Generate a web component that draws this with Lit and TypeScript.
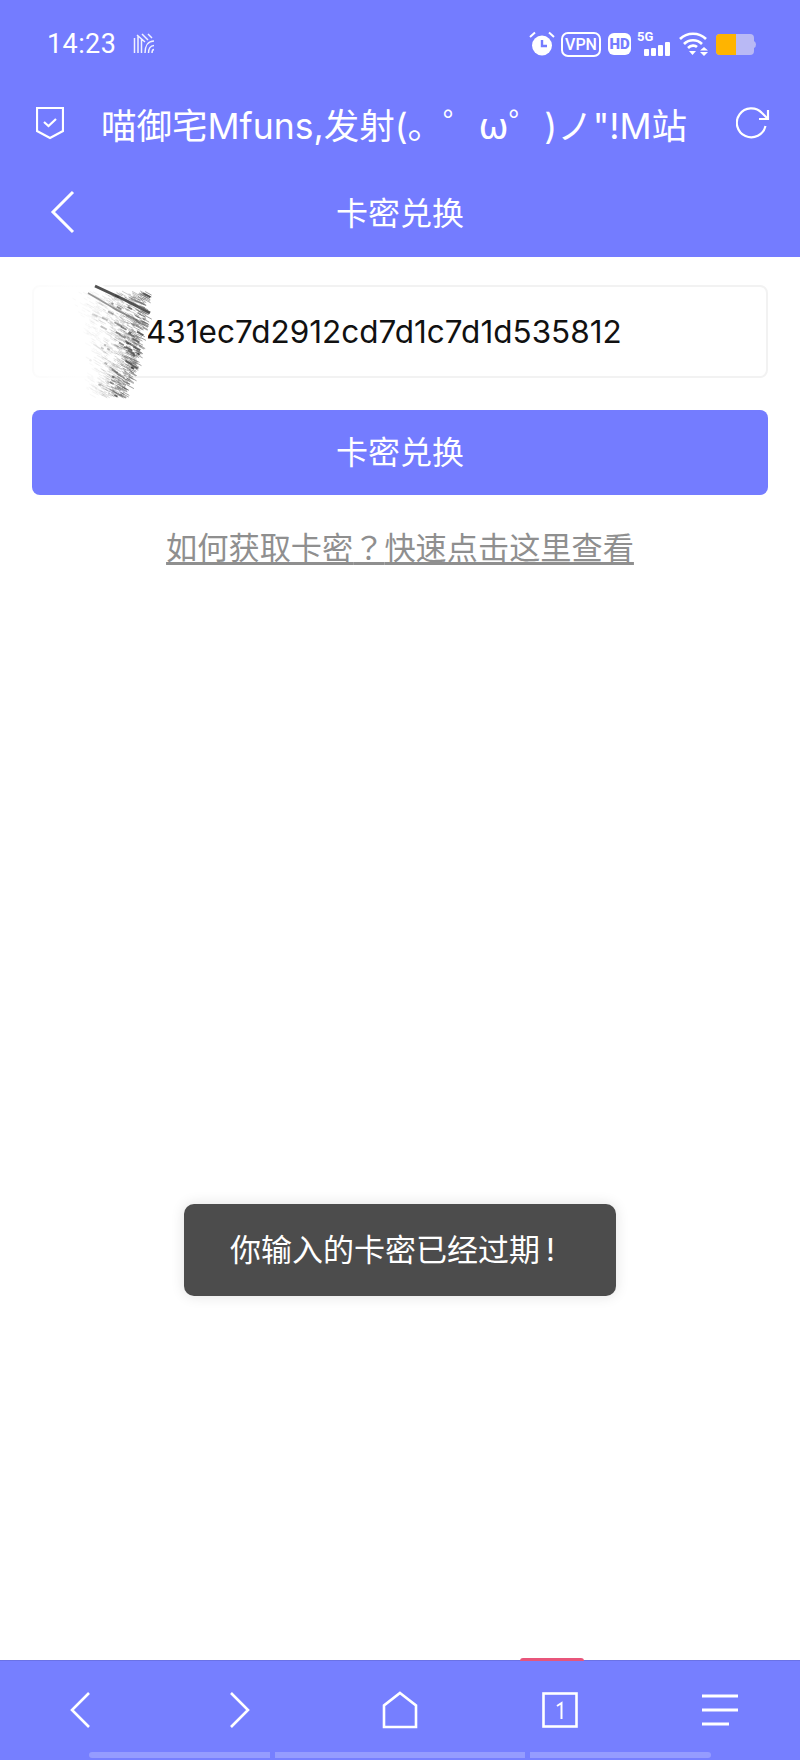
import { LitElement, html, css, svg } from "lit";
import { customElement } from "lit/decorators.js";

function scribble() {
  let seed = 12345;
  const r = () => ((seed = (seed * 16807) % 2147483647) / 2147483647);
  const out: any[] = [];
  out.push(svg`<path d="M95 29 L125 43 L150 56" stroke="#333" stroke-width="3" fill="none" opacity=".85"/>`);
  out.push(svg`<path d="M88 36 L112 50 L148 70" stroke="#555" stroke-width="1.500" fill="none" opacity=".6"/>`);
  for (let i = 0; i < 1000; i++) {
    const y0 = 34 + r() * 104;
    const t = (y0 - 34) / 104;
    const right = 146 - t * t * 24;
    const left = t < 0.5 ? 70 + t * 30 : 85 - (t - 0.5) * 4;
    const x = left + Math.pow(r(), 0.6) * (right - left);
    const len = 1.5 + r() * 6;
    const strength = (x - left) / (right - left);
    const dark = r() > 0.965;
    out.push(
      svg`<line x1=${x} y1=${y0} x2=${x + len} y2=${y0 + len * 0.55} stroke=${dark ? "#222" : "#666"} stroke-width=${dark ? 1.8 : 0.9} opacity=${dark ? 0.8 * strength : 0.03 + strength * strength * 0.65}/>`
    );
  }
  return out;
}

@customElement("app-root")
export class AppRoot extends LitElement {
  static styles = css`
    :host {
      display: block;
      width: 800px;
      height: 1760px;
      font-family: Inter, "Noto Sans CJK SC", sans-serif;
      background: #fff;
    }
    .page {
      position: relative;
      height: 1760px;
      display: flex;
      flex-direction: column;
      overflow: hidden;
    }
    svg { display: block; flex: none; }
    header { background: #747cff; color: #fff; height: 257px; flex: none; }
    .status {
      height: 88px;
      display: flex;
      align-items: center;
      padding: 0 44px 0 47px;
      box-sizing: border-box;
    }
    .time { font-size: 27px; font-family: Roboto, sans-serif; letter-spacing: .4px; margin-right: 17px; }
    .spacer { flex: 1; }
    .vpn {
      margin: 0 7px 0 6px;
      box-sizing: border-box;
      width: 40px; height: 25px;
      border: 2px solid #fff;
      border-radius: 7px;
      font: 500 16px/21px Roboto, sans-serif;
      text-align: center;
    }
    .hd {
      width: 23px; height: 22px;
      border-radius: 6px;
      background: #fff;
      color: #747cff;
      font: 900 15px/22px Roboto, sans-serif;
      text-align: center;
      margin-right: 6px;
    }
    .sig { position: relative; width: 34px; height: 24px; margin-right: 8px; }
    .fiveg { position: absolute; left: 0; top: -2px; font: 700 13px/14px Roboto, sans-serif; }
    .batt { margin-left: 8px; }
    .title {
      height: 72px;
      display: flex;
      align-items: center;
      padding: 0 30px 2px 36px;
      box-sizing: border-box;
    }
    .title-text {
      font-size: 35.500px;
      margin-left: 37px;
      white-space: nowrap;
      flex: 1;
    }
    .om { font-family: "DejaVu Sans", sans-serif; font-size: 36px; }
    .nav {
      height: 97px;
      position: relative;
      display: flex;
      align-items: center;
      justify-content: center;
      font-size: 32px;
      padding-top: 4px;
      box-sizing: border-box;
    }
    .nav svg { position: absolute; left: 50px; top: 30px; }
    main {
      flex: 1;
      padding: 28px 32px 0;
      display: flex;
      flex-direction: column;
    }
    .input-wrap { position: relative; }
    .input {
      box-sizing: border-box;
      height: 93px;
      border: 2px solid #f2f2f2;
      border-radius: 8px;
      background: #fff;
      display: flex;
      align-items: center;
      padding-left: 112px;
      font-size: 31.500px;
      color: #111;
    }
    .scribble { position: absolute; left: -32px; top: -28px; }
    .btn {
      margin-top: 32px;
      height: 85px;
      border-radius: 8px;
      background: #747cff;
      color: #fff;
      font-size: 32px;
      display: flex;
      align-items: center;
      justify-content: center;
      padding-bottom: 5px;
      box-sizing: border-box;
    }
    .link {
      margin-top: 28px;
      text-align: center;
      font-size: 31.200px;
      color: #8f8f8f;
      text-decoration: underline;
      text-decoration-thickness: 2.500px;
      text-underline-offset: 3px;
    }
    .tc { font-family: "Noto Sans CJK TC", sans-serif; }
    .bang { margin-left: 6px; }
    .toast {
      position: absolute;
      left: 184px;
      top: 1204px;
      width: 432px;
      height: 92px;
      box-sizing: border-box;
      padding: 0 0 6px 46px;
      border-radius: 10px;
      background: #4c4c4c;
      color: #fff;
      font-size: 31px;
      display: flex;
      align-items: center;
      box-shadow: 0 0 14px rgba(0,0,0,.12);
    }
    footer {
      position: relative;
      flex: none;
      height: 100px;
      background: #767fff;
      display: grid;
      grid-template-columns: repeat(5, 1fr);
      justify-items: center;
      border-top: 1px solid #6a72e6;
      box-sizing: border-box;
    }
    footer > svg { margin-top: 30px; }
    .bump {
      position: absolute;
      left: 520px; top: -3px;
      width: 64px; height: 3px;
      background: #e8557a;
      border-radius: 6px 6px 0 0;
    }
    .pill-row {
      position: absolute;
      left: 89px; top: 91px;
      display: flex;
      gap: 5px;
    }
    .pill { height: 6px; background: #959cff; }
    .pill.a { width: 181px; border-radius: 3px 0 0 3px; }
    .pill.b { width: 250px; }
    .pill.c { width: 181px; border-radius: 0 3px 3px 0; }
  `;

  render() {
    return html`
      <div class="page">
        <header>
          <div class="status">
            <span class="time">14:23</span>
            <svg width="22" height="22" viewBox="0 0 22 22" fill="none" stroke="#fff" stroke-width="1.500" opacity=".9">
              <path d="M1.500 5V20M5 3V20M8.500 6V20M4 2L12 9M9 1L15 7M15 1L19 5M21 8C15 8 12 13 12 20M21 12.500C17.500 12.500 15.500 16 15.500 20M21 16.500C19.500 16.500 19 18 19 20"/>
            </svg>
            <span class="spacer"></span>
            <svg width="26" height="26" viewBox="0 0 26 26" fill="#fff">
              <circle cx="13" cy="14.500" r="10"/>
              <path d="M1 6L6 1.500M25 6L20 1.500" stroke="#fff" stroke-width="2" fill="none"/>
              <path d="M13 9V15H18" stroke="#747cff" stroke-width="2.400" fill="none"/>
            </svg>
            <span class="vpn">VPN</span>
            <span class="hd">HD</span>
            <span class="sig">
              <span class="fiveg">5G</span>
              <svg width="34" height="24" viewBox="0 0 34 24" fill="#fff">
                <rect x="7" y="17" width="5" height="7" rx="1"/>
                <rect x="14" y="16" width="5" height="8" rx="1"/>
                <rect x="21" y="13" width="5" height="11" rx="1"/>
                <rect x="28" y="10" width="5" height="14" rx="1"/>
              </svg>
            </span>
            <svg width="29" height="24" viewBox="0 0 29 24" fill="none" stroke="#fff" stroke-width="2.600">
              <path d="M1 7C8 0 20 0 27 7M5 12C10 7 18 7 23 12M9 16C12 13 16 13 18 15"/>
              <path d="M10 19H17L13.500 23Z" fill="#fff" stroke="none"/>
              <path d="M21 18.500H29L25 15ZM21 20H29L25 24Z" fill="#fff" stroke="none"/>
            </svg>
            <svg class="batt" width="40" height="21" viewBox="0 0 40 21">
              <path d="M4 0H34Q38 0 38 4V17Q38 21 34 21H4Q0 21 0 17V4Q0 0 4 0Z" fill="#b9b9f5"/>
              <path d="M38 7Q40 8 40 10.500Q40 13 38 14Z" fill="#b9b9f5"/>
              <path d="M4 0H20V21H4Q0 21 0 17V4Q0 0 4 0Z" fill="#ffb400"/>
            </svg>
          </div>
          <div class="title">
            <svg width="28" height="33" viewBox="0 0 28 33" fill="none" stroke="#fff" stroke-width="2.200">
              <path d="M1 1H27V24L14 31L1 24Z"/>
              <path d="M8 15L12.500 19L20 12"/>
            </svg>
            <span class="title-text">喵御宅Mfuns,发射(。゜<span class="om">ω</span>゜)ノ"!M站</span>
            <svg width="34" height="33" viewBox="0 0 34 33" fill="none" stroke="#fff" stroke-width="2.200">
              <path d="M29.500 19A14.500 14.500 0 1 1 26 6L31 11"/>
              <path d="M32 3V12H23"/>
            </svg>
          </div>
          <div class="nav">
            <svg width="26" height="44" viewBox="0 0 26 44" fill="none" stroke="#fff" stroke-width="3">
              <path d="M23 2L3 22L23 42"/>
            </svg>
            <span>卡密兑换</span>
          </div>
        </header>
        <main>
          <div class="input-wrap">
            <div class="input">431ec7d2912cd7d1c7d1d535812</div>
            <svg class="scribble" width="180" height="145" viewBox="0 0 180 145">
              <defs>
                <linearGradient id="fade" x1="0" x2="1" y1="0" y2="0">
                  <stop offset="0" stop-color="#fff" stop-opacity=".7"/>
                  <stop offset=".3" stop-color="#fff" stop-opacity=".9"/>
                  <stop offset="1" stop-color="#fff"/>
                </linearGradient>
              </defs>
              <path d="M28 24H95L148 54V80L128 130L110 138L40 124H28Z" fill="url(#fade)"/>
              ${scribble()}
            </svg>
          </div>
          <div class="btn">卡密兑换</div>
          <div class="link">如何获取卡密<span class="tc">？</span>快速点击这里查看</div>
        </main>
        <div class="toast"><span>你输入的卡密已经过期<span class="bang">!</span></span></div>
        <footer>
          <span class="bump"></span>
          <svg width="20" height="38" viewBox="0 0 20 38" fill="none" stroke="#fff" stroke-width="2.600">
            <path d="M19 2L2 19L19 36"/>
          </svg>
          <svg width="20" height="38" viewBox="0 0 20 38" fill="none" stroke="#fff" stroke-width="2.600">
            <path d="M1 2L18 19L1 36"/>
          </svg>
          <svg width="36" height="38" viewBox="0 0 36 38" fill="none" stroke="#fff" stroke-width="2.600">
            <path d="M18 2L34 14.500V36H2V14.500Z"/>
          </svg>
          <svg width="36" height="38" viewBox="0 0 36 38" fill="none">
            <rect x="1.500" y="2.500" width="33" height="33" stroke="#fff" stroke-width="2.600"/>
            <path d="M15 15L19.500 12V28" stroke="#fff" stroke-width="2"/>
          </svg>
          <svg width="36" height="38" viewBox="0 0 36 38" fill="none" stroke="#fff" stroke-width="3">
            <path d="M0 5H36M0 19H36M0 33H27"/>
          </svg>
          <div class="pill-row">
            <span class="pill a"></span><span class="pill b"></span><span class="pill c"></span>
          </div>
        </footer>
      </div>
    `;
  }
}
